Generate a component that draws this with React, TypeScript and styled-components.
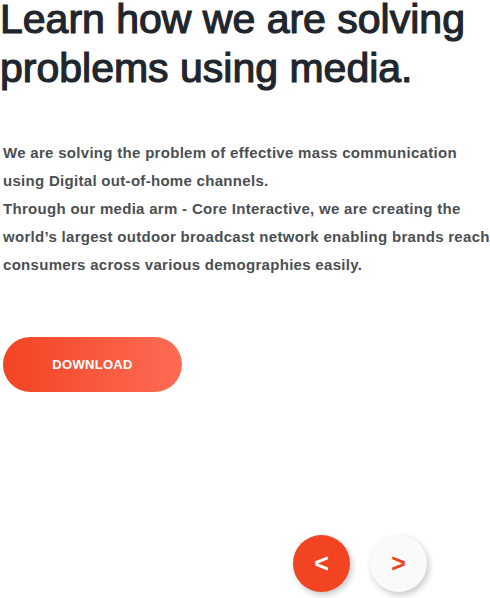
import React from "react";
import styled, { createGlobalStyle } from "styled-components";

const Global = createGlobalStyle`
  html, body { margin: 0; padding: 0; background: #ffffff; }
  body { font-family: "Liberation Sans", Arial, sans-serif; overflow: hidden; }
`;

const Page = styled.div`
  width: 490px;
  height: 598px;
  display: flex;
  flex-direction: column;
  box-sizing: border-box;
`;

const Heading = styled.h1`
  margin: -5px 0 0 0;
  font-size: 41px;
  line-height: 49px;
  font-weight: 400;
  color: #1f262d;
  white-space: nowrap;
  -webkit-text-stroke: 1.2px #1f262d;
`;

const Body = styled.div`
  margin: 46px 0 0 3px;
  display: flex;
  flex-direction: column;
`;

const Line = styled.span`
  display: block;
  font-size: 15px;
  line-height: 28px;
  font-weight: 700;
  letter-spacing: 0.3px;
  color: #4b4f54;
  white-space: nowrap;
`;

const DownloadButton = styled.button`
  margin: 58px 0 0 3px;
  width: 179px;
  height: 55px;
  border: none;
  border-radius: 28px;
  background: linear-gradient(90deg, #f24423 0%, #fd6c55 100%);
  color: #ffffff;
  font-family: "Liberation Sans", Arial, sans-serif;
  font-size: 13px;
  font-weight: 700;
  letter-spacing: 0.3px;
  display: flex;
  align-items: center;
  justify-content: center;
  cursor: pointer;
`;

const Nav = styled.div`
  margin: 143px 0 0 293px;
  display: flex;
  gap: 20px;
`;

const Circle = styled.button<{ $active?: boolean }>`
  width: 57px;
  height: 57px;
  border-radius: 50%;
  border: none;
  background: ${(p) => (p.$active ? "#f24423" : "#fafafa")};
  color: ${(p) => (p.$active ? "#ffffff" : "#f24423")};
  box-shadow: 2px 3px 6px rgba(0, 0, 0, 0.22);
  font-family: "Liberation Sans", Arial, sans-serif;
  font-size: 25px;
  font-weight: 700;
  display: flex;
  align-items: center;
  justify-content: center;
  padding: 0;
  cursor: pointer;
`;

const lines = [
  "We are solving the problem of effective mass communication",
  "using Digital out-of-home channels.",
  "Through our media arm - Core Interactive, we are creating the",
  "world\u2019s largest outdoor broadcast network enabling brands reach",
  "consumers across various demographies easily.",
];

export default function App() {
  return (
    <Page>
      <Global />
      <Heading>
        Learn how we are solving
        <br />
        problems using media.
      </Heading>
      <Body>
        {lines.map((l) => (
          <Line key={l}>{l}</Line>
        ))}
      </Body>
      <DownloadButton>DOWNLOAD</DownloadButton>
      <Nav>
        <Circle $active>&lt;</Circle>
        <Circle>&gt;</Circle>
      </Nav>
    </Page>
  );
}
